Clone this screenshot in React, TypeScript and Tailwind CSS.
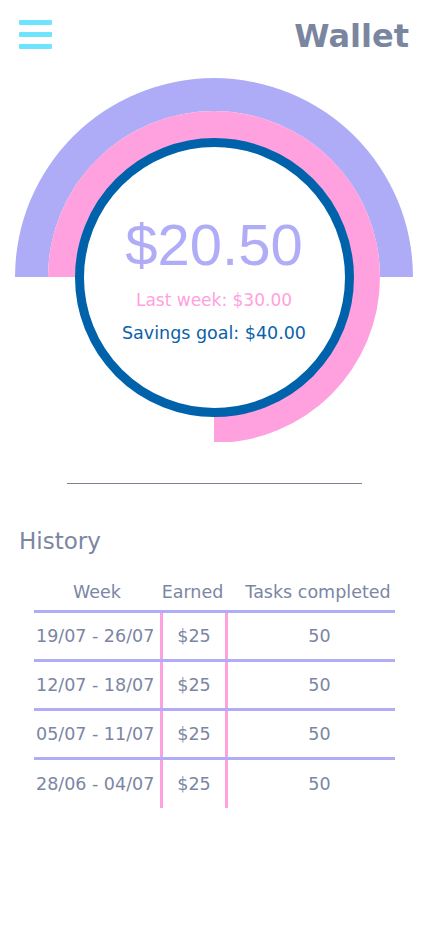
const rows = [
  { week: "19/07 - 26/07", earned: "$25", tasks: "50" },
  { week: "12/07 - 18/07", earned: "$25", tasks: "50" },
  { week: "05/07 - 11/07", earned: "$25", tasks: "50" },
  { week: "28/06 - 04/07", earned: "$25", tasks: "50" },
];

function Gauge() {
  return (
    <div className="relative mt-[26px] flex h-[364px] w-[428px] flex-col items-center pt-[60px]">
      <svg
        className="absolute inset-0"
        width="428"
        height="364"
        viewBox="0 0 428 364"
      >
        {/* weekly total, half ring */}
        <path
          d="M 15 199 A 199 199 0 0 1 413 199 L 380 199 A 166 166 0 0 0 48 199 Z"
          fill="#afacf7"
        />
        {/* last week, three quarter ring */}
        <path
          d="M 48 199 A 166 166 0 1 1 214 365 L 214 329 A 130 130 0 1 0 84 199 Z"
          fill="#ffa1de"
        />
      </svg>
      <div className="relative flex h-[279px] w-[279px] flex-col items-center rounded-full border-[9px] border-[#0062ab] bg-white pt-[69px]">
        <p className="font-['Liberation_Sans',Arial,sans-serif] text-[58px] leading-none text-[#b0acf7]">
          $20.50
        </p>
        <p className="mt-[14px] text-[17px] leading-[24px] text-[#ffa1de]">
          Last week: $30.00
        </p>
        <p className="mt-[9px] text-[17.5px] leading-[24px] text-[#0a62a9]">
          Savings goal: $40.00
        </p>
      </div>
    </div>
  );
}

export default function App() {
  return (
    <div className="w-[428px] min-h-[926px] bg-white font-['DejaVu_Sans',sans-serif] text-[#7b86a3]">
      {/* Top bar */}
      <div className="flex items-start justify-between pt-[20px] pl-[19px] pr-[19px]">
        <button className="flex w-[33px] flex-col gap-[7px]">
          <span className="block h-[5px] w-[33px] rounded-[1px] bg-[#6ee4ff]" />
          <span className="block h-[5px] w-[33px] rounded-[1px] bg-[#6ee4ff]" />
          <span className="block h-[5px] w-[33px] rounded-[1px] bg-[#6ee4ff]" />
        </button>
        <h1 className="text-[32px] font-bold leading-none text-[#7a86a0]">Wallet</h1>
      </div>

      <Gauge />

      <div className="mx-auto mt-[41px] h-px w-[295px] bg-[#7b8290]" />

      <h2 className="mt-[41px] pl-[19px] text-[23px] leading-[32px]">History</h2>

      {/* History table */}
      <div className="ml-[34px] mt-[23px] w-[361px] text-[17.5px] leading-[24px]">
        <div className="grid grid-cols-[126px_65px_170px] border-b-[3px] border-[#b0acf7] pb-[6px]">
          <div className="text-center">Week</div>
          <div className="text-center">Earned</div>
          <div className="pl-[16px] text-center">Tasks completed</div>
        </div>
        {rows.map((r, i) => (
          <div
            key={r.week}
            className={
              i < rows.length - 1
                ? "grid h-[49px] grid-cols-[126px_65px_170px] border-b-[3px] border-[#b0acf7]"
                : "grid h-[48px] grid-cols-[126px_65px_170px]"
            }
          >
            <div className="flex items-center pl-[2px]">{r.week}</div>
            <div className="flex items-center justify-center border-l-[3px] border-[#ffa1de]">
              {r.earned}
            </div>
            <div className="flex items-center justify-center border-l-[3px] border-[#ffa1de] pl-[16px]">
              {r.tasks}
            </div>
          </div>
        ))}
      </div>
    </div>
  );
}
